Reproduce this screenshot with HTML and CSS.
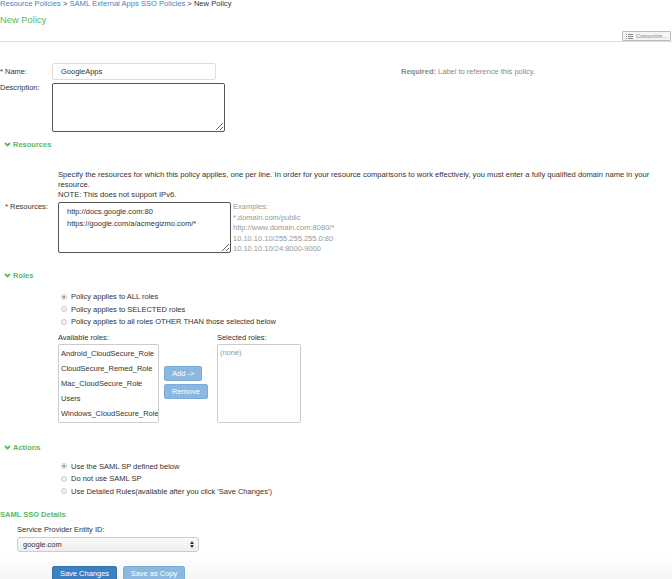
FILE: index.html
```html
<!DOCTYPE html>
<html>
<head>
    <meta charset="UTF-8">
    <title>New Policy</title>
    <link rel="stylesheet" href="styles.css">
</head>
<body>
    <div class="breadcrumb">
        <a href="#">Resource Policies</a> &gt; <a href="#">SAML External Apps SSO Policies</a> &gt; New Policy
    </div>
    <div class="page-title">New Policy</div>
    <div class="toolbar">
        <button class="customize">
            <svg width="7" height="5" viewBox="0 0 7 5"><path d="M0 .5h1M2 .5h5M0 2.5h1M2 2.5h5M0 4.5h1M2 4.5h5" stroke="#888" stroke-width="1"/></svg>
            Customize...
        </button>
    </div>

    <div class="row name-row">
        <label class="lbl">* Name:</label>
        <input class="text-input" type="text" value="GoogleApps">
        <span class="hint"><b>Required:</b> Label to reference this policy.</span>
    </div>
    <div class="row desc-row">
        <label class="lbl">Description:</label>
        <textarea class="desc"></textarea>
    </div>

    <div class="section-head">
        <svg class="chev" width="7" height="5" viewBox="0 0 7 5"><path d="M1 1l2.5 2.5L6 1" fill="none" stroke="#5cb85c" stroke-width="1.8"/></svg>
        Resources
    </div>
    <div class="resources">
        <p class="help">Specify the resources for which this policy applies, one per line. In order for your resource comparisons to work effectively, you must enter a fully qualified domain name in your resource.<br>NOTE: This does not support IPv6.</p>
        <div class="res-row">
            <label class="res-lbl">* Resources:</label>
            <textarea class="res-area">http://docs.google.com:80
https://google.com/a/acmegizmo.com/*</textarea>
            <div class="examples">
                Examples:<br>
                *.domain.com/public<br>
                http://www.domain.com:8080/*<br>
                10.10.10.10/255.255.255.0:80<br>
                10.10.10.10/24:8000-9000
            </div>
        </div>
    </div>

    <div class="section-head roles-head">
        <svg class="chev" width="7" height="5" viewBox="0 0 7 5"><path d="M1 1l2.5 2.5L6 1" fill="none" stroke="#5cb85c" stroke-width="1.8"/></svg>
        Roles
    </div>
    <div class="options">
        <div class="opt"><span class="radio on"></span>Policy applies to ALL roles</div>
        <div class="opt"><span class="radio"></span>Policy applies to SELECTED roles</div>
        <div class="opt"><span class="radio"></span>Policy applies to all roles OTHER THAN those selected below</div>
    </div>
    <div class="roles">
        <div class="role-col">
            <div class="col-lbl">Available roles:</div>
            <div class="listbox avail">
                <div>Android_CloudSecure_Role</div>
                <div>CloudSecure_Remed_Role</div>
                <div>Mac_CloudSecure_Role</div>
                <div>Users</div>
                <div>Windows_CloudSecure_Role</div>
            </div>
        </div>
        <div class="move-btns">
            <button class="btn-light">Add -&gt;</button>
            <button class="btn-light">Remove</button>
        </div>
        <div class="role-col">
            <div class="col-lbl">Selected roles:</div>
            <div class="listbox selected">
                <div class="none">(none)</div>
            </div>
        </div>
    </div>

    <div class="section-head actions-head">
        <svg class="chev" width="7" height="5" viewBox="0 0 7 5"><path d="M1 1l2.5 2.5L6 1" fill="none" stroke="#5cb85c" stroke-width="1.8"/></svg>
        Actions
    </div>
    <div class="options actions">
        <div class="opt"><span class="radio on"></span>Use the SAML SP defined below</div>
        <div class="opt"><span class="radio"></span>Do not use SAML SP</div>
        <div class="opt"><span class="radio"></span>Use Detailed Rules(available after you click 'Save Changes')</div>
    </div>

    <div class="saml-head">SAML SSO Details</div>
    <div class="saml">
        <div class="sp-lbl">Service Provider Entity ID:</div>
        <div class="select">
            <span>google.com</span>
            <svg width="4" height="7" viewBox="0 0 4 7"><path d="M0 3L2 0L4 3zM0 4L2 7L4 4z" fill="#333"/></svg>
        </div>
    </div>

    <div class="footer">
        <button class="btn-primary">Save Changes</button>
        <button class="btn-light copy">Save as Copy</button>
    </div>
</body>
</html>
```

FILE: styles.css
```css
* { box-sizing: border-box; }
body { margin: 0; font-family: "Liberation Sans", Arial, sans-serif; font-size: 7.5px; color: #333; background: #fff; overflow: hidden; }
a { color: #3d85c6; text-decoration: none; }

.breadcrumb { margin-top: -1px; height: 8px; line-height: 9px; font-size: 7.6px; color: #333; }
.page-title { margin-top: 7px; font-size: 9.4px; color: #5cb85c; line-height: 12px; }
.toolbar { display: flex; justify-content: flex-end; margin-top: 5px; padding-right: 1px; border-bottom: 1px solid #ddd; }
.customize { display: flex; align-items: center; gap: 3px; height: 10px; padding: 0 3px; font-family: inherit; font-size: 5.6px; color: #888; background: #f4f4f4; border: 1px solid #bbb; border-radius: 1px; margin: 0; }

.row { display: flex; align-items: flex-start; }
.lbl { width: 52px; flex: none; }
.name-row { margin-top: 21px; align-items: center; }
.text-input { width: 164px; height: 17px; padding: 0 8px; font-family: inherit; font-size: 7.5px; color: #333; border: 1px solid #ddd; border-radius: 2px; margin: 0; }
.hint { margin-left: 185px; color: #888; }
.desc-row { margin-top: 3px; }
.desc-row .lbl { line-height: 9px; }
.desc { width: 173px; height: 49px; border: 1px solid #555; border-radius: 2px; margin: 0; resize: both; }

.section-head { display: flex; align-items: center; gap: 2px; padding-left: 4px; margin-top: 8px; font-weight: bold; color: #5cb85c; line-height: 9px; }
.chev { flex: none; }

.resources { padding-left: 5px; }
.help { margin: 21px 0 0 53px; max-width: 600px; font-size: 7.65px; line-height: 10px; }
.res-row { display: flex; align-items: flex-start; margin-top: 2px; }
.res-lbl { width: 53px; flex: none; line-height: 9px; }
.res-area { width: 173px; height: 51px; margin: 0; padding: 3px 8px; font-family: inherit; font-size: 7.5px; line-height: 12px; color: #333; border: 1px solid #555; border-radius: 2px; resize: both; }
.examples { margin-left: 2px; color: #999; line-height: 10.5px; }

.roles-head { margin-top: 16px; }
.options { padding-left: 61px; margin-top: 11px; }
.opt { display: flex; align-items: center; gap: 4px; height: 12.5px; }
.radio { width: 6px; height: 6px; border-radius: 50%; border: 1px solid #ccc; background: #f2f2f2; flex: none; position: relative; }
.radio.on::after { content: ""; position: absolute; left: 1px; top: 1px; width: 2px; height: 2px; border-radius: 50%; background: #666; }

.roles { display: flex; align-items: flex-start; padding-left: 58px; margin-top: 5px; }
.col-lbl { line-height: 9px; margin-bottom: 2px; }
.listbox { height: 79px; border: 1px solid #ccc; border-radius: 2px; background: #fff; }
.avail { width: 101px; padding-top: 1px; overflow: hidden; }
.avail div { height: 15px; line-height: 15px; padding-left: 2px; white-space: nowrap; }
.selected { width: 84px; padding: 3px 2px; }
.none { color: #999; line-height: 9px; }
.move-btns { display: flex; flex-direction: column; align-items: flex-start; gap: 3px; margin: 33px 9px 0 5px; }
.btn-light { height: 15px; padding: 0 7px; font-family: inherit; font-size: 7.5px; color: #fff; background: #8ab8e0; border: 1px solid #7cadd9; border-radius: 2px; margin: 0; }

.actions-head { margin-top: 20px; }
.actions { margin-top: 8px; }

.saml-head { margin-top: 12px; font-weight: bold; color: #5cb85c; line-height: 9px; }
.saml { padding-left: 17px; }
.sp-lbl { margin-top: 6px; line-height: 9px; }
.select { display: flex; justify-content: space-between; align-items: center; width: 182px; height: 15px; margin-top: 3px; padding: 0 4px 0 5px; border: 1px solid #ccc; border-radius: 3px; background: linear-gradient(#fafafa, #eee); color: #333; }

.footer { margin-top: 3px; height: 40px; padding: 11px 0 0 52px; display: flex; gap: 6px; background: linear-gradient(#fff, #f5f5f5 60%, #ededed); }
.btn-primary { height: 16px; width: 65px; padding: 0; font-family: inherit; font-size: 7.5px; color: #fff; background: #3c80c2; border: 1px solid #3573b0; border-radius: 2px; margin: 0; }
.copy { width: 62px; height: 16px; padding: 0; }
```
